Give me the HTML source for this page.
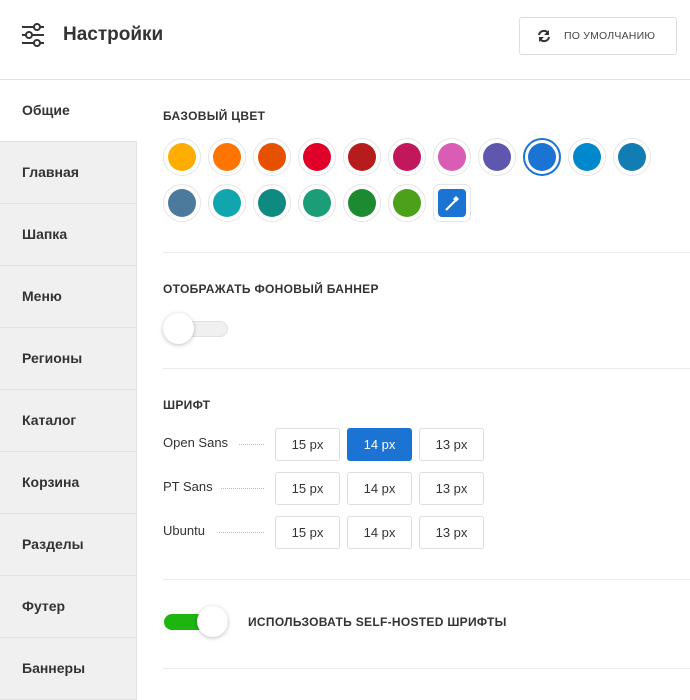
<!DOCTYPE html>
<html><head><meta charset="utf-8"><style>
*{box-sizing:border-box;margin:0;padding:0}
body{width:690px;height:694px;overflow:hidden;background:#fff;font-family:"Liberation Sans","DejaVu Sans",sans-serif;color:#333;position:relative}
.abs{position:absolute}
.hdr{left:0;top:0;width:690px;height:80px;border-bottom:1px solid #e2e2e2}
.title{left:63px;top:24px;font-size:19px;font-weight:bold;color:#333}
.btn{left:519px;top:17px;width:158px;height:38px;border:1px solid #ddd;border-radius:3px;font-size:10.5px;color:#444;letter-spacing:.2px}
.side{left:0;top:80px;width:137px}
.side div{height:62px;border-bottom:1px solid #e2e2e2;border-right:1px solid #e2e2e2;background:#f0f0f0;font-size:14px;font-weight:bold;padding-left:22px;line-height:61px;color:#333}
.side div.a{background:#fff;border-right:none}
.lab{font-size:12px;font-weight:bold;letter-spacing:.3px;color:#333}
.c{width:38px;height:38px;border-radius:50%;border:1px solid #e6e6e6;display:flex;align-items:center;justify-content:center}
.c i{display:block;width:28px;height:28px;border-radius:50%}
.hr{left:163px;width:527px;height:1px;background:#ebebeb}
.fb{width:65px;height:33px;border:1px solid #ddd;border-radius:3px;font-size:13px;text-align:center;line-height:31px;color:#333}
.fn{font-size:13px;color:#333}
.dots{border-top:1px dotted #bbb;height:0}
</style></head><body>
<div class="abs hdr"></div>
<svg class="abs" style="left:20px;top:22px" width="26" height="26" viewBox="0 0 26 26"><g stroke="#333" stroke-width="2" fill="#fff"><line x1="2" y1="5" x2="24" y2="5"/><line x1="2" y1="13" x2="24" y2="13"/><line x1="2" y1="21" x2="24" y2="21"/><circle cx="17" cy="5" r="3"/><circle cx="9" cy="13" r="3"/><circle cx="17" cy="21" r="3"/></g></svg>
<div class="abs title">Настройки</div>
<div class="abs btn"><svg class="abs" style="left:17px;top:11px" width="14" height="14" viewBox="0 0 14 14"><g fill="none" stroke="#333" stroke-width="2"><path d="M2 6A5 5 0 0 1 11 4"/><path d="M12 8A5 5 0 0 1 3 10"/></g><path d="M12 1v5H7z" fill="#333"/><path d="M2 13V8h5z" fill="#333"/></svg><span class="abs" style="left:44px;top:12px">ПО УМОЛЧАНИЮ</span></div>
<div class="abs side"><div class="a">Общие</div><div>Главная</div><div>Шапка</div><div>Меню</div><div>Регионы</div><div>Каталог</div><div>Корзина</div><div>Разделы</div><div>Футер</div><div>Баннеры</div></div>
<div class="abs lab" style="left:163px;top:109px">БАЗОВЫЙ ЦВЕТ</div>
<div class="abs c" style="left:163px;top:138px"><i style="background:#ffad00"></i></div>
<div class="abs c" style="left:208px;top:138px"><i style="background:#ff7500"></i></div>
<div class="abs c" style="left:253px;top:138px"><i style="background:#e65100"></i></div>
<div class="abs c" style="left:298px;top:138px"><i style="background:#e0002a"></i></div>
<div class="abs c" style="left:343px;top:138px"><i style="background:#b71c1c"></i></div>
<div class="abs c" style="left:388px;top:138px"><i style="background:#c2185b"></i></div>
<div class="abs c" style="left:433px;top:138px"><i style="background:#d95cb5"></i></div>
<div class="abs c" style="left:478px;top:138px"><i style="background:#5e57ad"></i></div>
<div class="abs c" style="left:523px;top:138px;border:2px solid #1b74d4"><i style="background:#1b74d4"></i></div>
<div class="abs c" style="left:568px;top:138px"><i style="background:#0088cc"></i></div>
<div class="abs c" style="left:613px;top:138px"><i style="background:#127db3"></i></div>
<div class="abs c" style="left:163px;top:184px"><i style="background:#4b7a9c"></i></div>
<div class="abs c" style="left:208px;top:184px"><i style="background:#11a6ad"></i></div>
<div class="abs c" style="left:253px;top:184px"><i style="background:#0f8a80"></i></div>
<div class="abs c" style="left:298px;top:184px"><i style="background:#1b9e77"></i></div>
<div class="abs c" style="left:343px;top:184px"><i style="background:#1b8a30"></i></div>
<div class="abs c" style="left:388px;top:184px"><i style="background:#4ba21a"></i></div>
<div class="abs" style="left:433px;top:184px;width:38px;height:38px;border:1px solid #e6e6e6;border-radius:6px"><div class="abs" style="left:4px;top:4px;width:28px;height:28px;background:#1b74d4;border-radius:4px"><svg width="28" height="28" viewBox="0 0 28 28"><path d="M8 21l9-9" stroke="#fff" stroke-width="2"/><path d="M15 10l3 3 3-3-3-3z" fill="#fff"/></svg></div></div>
<div class="abs hr" style="top:252px"></div>
<div class="abs lab" style="left:163px;top:282px">ОТОБРАЖАТЬ ФОНОВЫЙ БАННЕР</div>
<div class="abs" style="left:163px;top:321px;width:65px;height:16px;border-radius:8px;background:#f0f0f0;border:1px solid #e2e2e2"></div>
<div class="abs" style="left:163px;top:313px;width:31px;height:31px;border-radius:50%;background:#fff;box-shadow:0 1px 4px rgba(0,0,0,.25)"></div>
<div class="abs hr" style="top:368px"></div>
<div class="abs lab" style="left:163px;top:398px">ШРИФТ</div>
<div class="abs fn" style="left:163px;top:435px">Open Sans</div><div class="abs dots" style="left:239px;top:444px;width:25px"></div>
<div class="abs fn" style="left:163px;top:479px">PT Sans</div><div class="abs dots" style="left:221px;top:488px;width:43px"></div>
<div class="abs fn" style="left:163px;top:523px">Ubuntu</div><div class="abs dots" style="left:219px;top:532px;width:45px"></div>
<div class="abs fb" style="left:275px;top:428px">15 px</div><div class="abs fb" style="left:347px;top:428px;background:#1b74d4;border-color:#1b74d4;color:#fff">14 px</div><div class="abs fb" style="left:419px;top:428px">13 px</div>
<div class="abs fb" style="left:275px;top:472px">15 px</div><div class="abs fb" style="left:347px;top:472px">14 px</div><div class="abs fb" style="left:419px;top:472px">13 px</div>
<div class="abs fb" style="left:275px;top:516px">15 px</div><div class="abs fb" style="left:347px;top:516px">14 px</div><div class="abs fb" style="left:419px;top:516px">13 px</div>
<div class="abs hr" style="top:579px"></div>
<div class="abs" style="left:164px;top:614px;width:64px;height:16px;border-radius:8px;background:#1db510"></div>
<div class="abs" style="left:197px;top:606px;width:31px;height:31px;border-radius:50%;background:#fff;box-shadow:0 1px 4px rgba(0,0,0,.25)"></div>
<div class="abs lab" style="left:248px;top:615px">ИСПОЛЬЗОВАТЬ SELF-HOSTED ШРИФТЫ</div>
<div class="abs hr" style="top:668px"></div>
</body></html>
